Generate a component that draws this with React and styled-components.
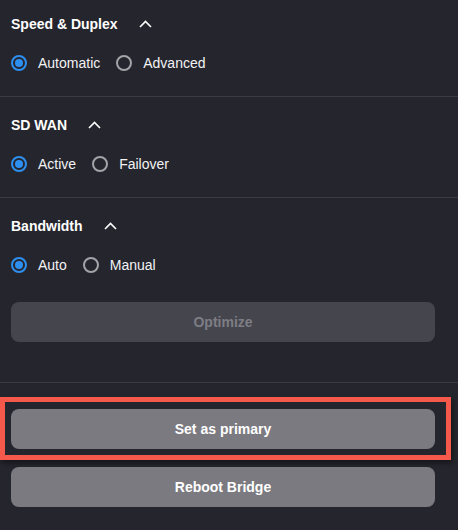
import React, { useState } from "react";
import styled, { createGlobalStyle } from "styled-components";

const GlobalStyle = createGlobalStyle`
  html, body {
    margin: 0;
    padding: 0;
    background: #25252d;
  }
  body {
    font-family: "Liberation Sans", Arial, sans-serif;
    -webkit-font-smoothing: antialiased;
  }
`;

const Panel = styled.div`
  width: 458px;
  height: 530px;
  background: #25252d;
  color: #ffffff;
  overflow: hidden;
`;

const Section = styled.section`
  padding: ${(p) => (p.first ? "14px" : "18px")} 11px ${(p) => p.bottom || "23px"};
  border-bottom: 1px solid #3b3b43;
`;

const Heading = styled.div`
  display: flex;
  align-items: center;
  gap: 21px;
  height: 20px;
  font-size: 14px;
  font-weight: 700;
  color: #ffffff;
`;

const Chevron = styled.svg`
  width: 13px;
  height: 8px;
`;

const RadioRow = styled.div`
  display: flex;
  align-items: center;
  gap: 16px;
  height: 20px;
  margin-top: 19px;
`;

const RadioLabel = styled.label`
  display: flex;
  align-items: center;
  gap: 11px;
  font-size: 14px;
  color: #f2f2f4;
  cursor: pointer;
`;

const RadioCircle = styled.span`
  box-sizing: border-box;
  width: 16px;
  height: 16px;
  border-radius: 50%;
  border: 2px solid ${(p) => (p.checked ? "#2d8ff0" : "#a3a3a8")};
  display: flex;
  align-items: center;
  justify-content: center;
  &::after {
    content: "";
    width: 8px;
    height: 8px;
    border-radius: 50%;
    background: ${(p) => (p.checked ? "#2d8ff0" : "transparent")};
  }
`;

const Button = styled.button`
  display: block;
  width: 424px;
  height: 40px;
  border: none;
  border-radius: 8px;
  font-family: "Liberation Sans", Arial, sans-serif;
  font-size: 14px;
  font-weight: 700;
  background: ${(p) => (p.disabled ? "#45454d" : "#7b7a80")};
  color: ${(p) => (p.disabled ? "#7d7d85" : "#ffffff")};
  cursor: ${(p) => (p.disabled ? "default" : "pointer")};
`;

const OptimizeWrap = styled.div`
  margin-top: 27px;
`;

const Actions = styled.div`
  padding-top: 14px;
  display: flex;
  flex-direction: column;
  gap: 7px;
`;

const Highlight = styled.div`
  width: fit-content;
  border: 5px solid #f4594b;
  padding: 7px 11px 6px 6px;
  box-shadow: 2px 3px 5px rgba(0, 0, 0, 0.45);
`;

const Plain = styled.div`
  padding-left: 11px;
`;

const ChevronUp = () => (
  <Chevron viewBox="0 0 13 8">
    <path d="M1 7 L6.5 1.5 L12 7" fill="none" stroke="#ffffff" strokeWidth="1.6" />
  </Chevron>
);

const RadioGroup = ({ options, value, onChange }) => (
  <RadioRow>
    {options.map((o) => (
      <RadioLabel key={o} onClick={() => onChange(o)}>
        <RadioCircle checked={value === o} />
        {o}
      </RadioLabel>
    ))}
  </RadioRow>
);

export default function App() {
  const [duplex, setDuplex] = useState("Automatic");
  const [wan, setWan] = useState("Active");
  const [bw, setBw] = useState("Auto");

  return (
    <Panel>
      <GlobalStyle />
      <Section first>
        <Heading>
          Speed &amp; Duplex <ChevronUp />
        </Heading>
        <RadioGroup options={["Automatic", "Advanced"]} value={duplex} onChange={setDuplex} />
      </Section>
      <Section>
        <Heading>
          SD WAN <ChevronUp />
        </Heading>
        <RadioGroup options={["Active", "Failover"]} value={wan} onChange={setWan} />
      </Section>
      <Section bottom="40px">
        <Heading>
          Bandwidth <ChevronUp />
        </Heading>
        <RadioGroup options={["Auto", "Manual"]} value={bw} onChange={setBw} />
        <OptimizeWrap>
          <Button disabled>Optimize</Button>
        </OptimizeWrap>
      </Section>
      <Actions>
        <Highlight>
          <Button>Set as primary</Button>
        </Highlight>
        <Plain>
          <Button>Reboot Bridge</Button>
        </Plain>
      </Actions>
    </Panel>
  );
}
